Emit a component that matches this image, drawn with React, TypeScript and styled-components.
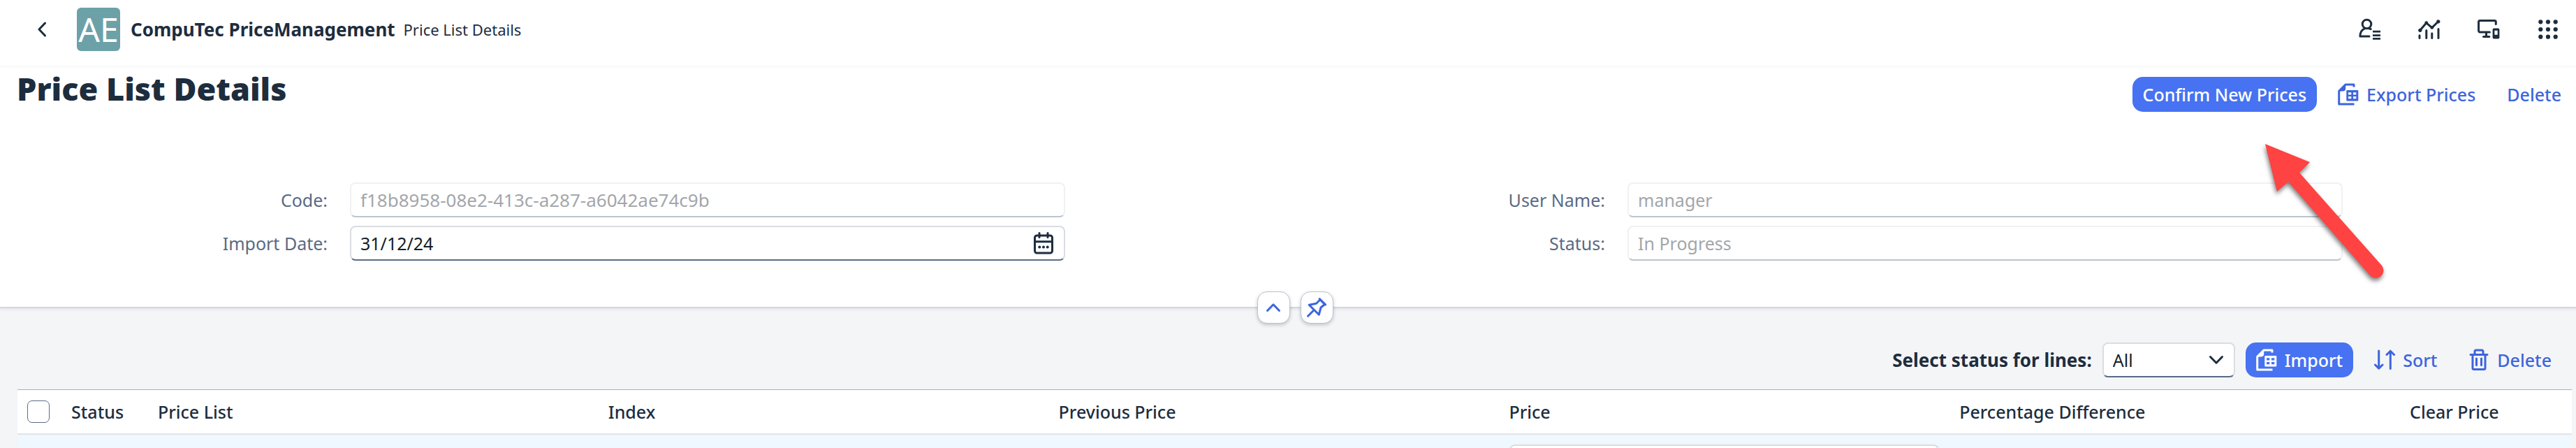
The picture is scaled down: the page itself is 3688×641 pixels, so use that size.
import React from "react";
import styled, { createGlobalStyle, css } from "styled-components";

const GlobalStyle = createGlobalStyle`
  *, *::before, *::after { box-sizing: border-box; }
  body {
    margin: 0;
    overflow: hidden;
    background: #f4f5f7;
    color: #1d2d3e;
    font-family: "Noto Sans", sans-serif;
    font-size: 25px;
    line-height: 36px;
  }
  button, input, select { font: inherit; color: inherit; margin: 0; }
  svg { display: block; flex: none; }
`;

const Page = styled.div`
  position: relative;
  height: 100vh;
  overflow: hidden;
`;

/* ---------- shell bar ---------- */

const ShellBar = styled.header`
  position: relative;
  z-index: 1;
  display: flex;
  align-items: center;
  padding: 11px 6px 21px 25px;
  background: #fff;
  box-shadow: 0 1px 4px rgba(34, 53, 72, 0.06);
`;

const IconButton = styled.button`
  display: flex;
  align-items: center;
  justify-content: center;
  width: 69px;
  height: 62px;
  padding: 0;
  border: 0;
  background: none;
  color: #1d2d3e;
`;

const Logo = styled.div`
  width: 62px;
  height: 62px;
  margin: 0 15px 0 16px;
  border-radius: 6px;
  background: #6ca1a8;
  color: #fff;
  font-size: 48px;
  line-height: 62px;
  text-align: center;
`;

const Brand = styled.span`
  font-size: 26px;
  font-weight: 700;
`;

const Subtitle = styled.span`
  margin-left: 12px;
  font-size: 22px;
`;

const ShellActions = styled.nav`
  display: flex;
  gap: 16px;
  margin-left: auto;
`;

/* ---------- page header ---------- */

const PageHeader = styled.section`
  position: relative;
  background: #fff;
  padding-bottom: 66px;
  border-bottom: 2px solid #d5d7da;
  box-shadow: 0 2px 4px rgba(34, 53, 72, 0.08);
`;

const TitleRow = styled.div`
  display: flex;
  align-items: flex-start;
  justify-content: space-between;
  padding: 0 6px 0 24px;
`;

const Title = styled.h1`
  margin: 3px 0 0;
  font-size: 45px;
  font-weight: 900;
  line-height: 60px;
`;

const Actions = styled.div`
  display: flex;
  gap: 15px;
  padding-top: 16px;
`;

const Button = styled.button<{ $primary?: boolean }>`
  display: flex;
  align-items: center;
  gap: 11px;
  height: 50px;
  padding: 0 15px;
  border: 0;
  border-radius: 15px;
  background: ${(p) => (p.$primary ? "#4772f1" : "transparent")};
  color: ${(p) => (p.$primary ? "#fff" : "#3d65dc")};
  font-weight: 550;
  white-space: nowrap;
`;

const Form = styled.form`
  display: grid;
  grid-template-columns: 1fr 1fr;
  row-gap: 12px;
  padding: 101px 15px 0;
`;

const Field = styled.div`
  display: grid;
  grid-template-columns: 486fr 1024fr 319fr;
  align-items: center;
`;

const FieldLabel = styled.label`
  padding-right: 32px;
  color: #5a6a84;
  text-align: right;
`;

const box = css`
  width: 100%;
  height: 50px;
  padding: 0 13px;
  border: 2px solid #d9dde2;
  border-bottom-color: #5b6b86;
  border-radius: 8px;
  background: #fff;
  color: #131e29;
  outline: 0;
`;

const TextInput = styled.input`
  ${box}
  &:disabled {
    border-color: #f0f1f3;
    border-bottom-color: #bcc4cf;
    color: #a3a6aa;
    opacity: 1;
  }
`;

const CodeInput = styled(TextInput)`
  font-size: 26px;
`;

/* Control and its trailing glyph share one grid cell. */
const WithGlyph = styled.div`
  display: grid;
  align-items: center;
  & > * { grid-area: 1 / 1; }
  & > svg {
    justify-self: end;
    margin-right: 16px;
    pointer-events: none;
    color: #1d2d3e;
  }
`;

const HeaderToggles = styled.div`
  position: absolute;
  left: 0;
  right: 0;
  bottom: -24px;
  display: flex;
  justify-content: center;
  gap: 15px;
  padding-left: 20px;
`;

const ToggleButton = styled.button`
  display: flex;
  align-items: center;
  justify-content: center;
  width: 47px;
  height: 46px;
  padding: 0;
  border: 1px solid #bcc3ce;
  border-radius: 14px;
  background: #fff;
  color: #3d65dc;
  box-shadow: 0 2px 5px rgba(34, 53, 72, 0.25);
`;

/* ---------- lines table ---------- */

const TableToolbar = styled.div`
  display: flex;
  align-items: center;
  justify-content: flex-end;
  gap: 15px;
  padding: 49px 20px 17px 25px;
`;

const ToolbarLabel = styled.label`
  font-size: 26px;
  font-weight: 700;
`;

const StatusFilter = styled(WithGlyph)`
  width: 190px;
`;

const Select = styled.select`
  ${box}
  appearance: none;
`;

const TableArea = styled.section`
  padding: 0 6px 0 25px;
`;

const Table = styled.table`
  width: 100%;
  table-layout: fixed;
  border-collapse: separate;
  border-spacing: 0;
  border-top: 1px solid #a8aebb;
  background: #fff;
`;

const HeadCell = styled.th<{ $width?: number }>`
  width: ${(p) => (p.$width ? `${p.$width}px` : "auto")};
  height: 64px;
  padding: 0 14px;
  border-bottom: 2px solid #e1e4e6;
  font-weight: 550;
  text-align: left;
  white-space: nowrap;
`;

const Cell = styled.td`
  height: 78px;
  padding: 14px 15px;
  background: #eff7ff;
`;

const CheckBox = styled.input`
  display: block;
  appearance: none;
  width: 32px;
  height: 32px;
  border: 1px solid #5b6b86;
  border-radius: 7px;
  background: #fff;
`;

/* ---------- callout arrow ---------- */

const Callout = styled.svg`
  position: absolute;
  top: 196px;
  right: 266px;
  z-index: 2;
  pointer-events: none;
  filter: drop-shadow(-1px 4px 3px rgba(0, 0, 0, 0.5));
`;

/* ---------- glyphs ---------- */

type GlyphProps = { w?: number; h?: number; children: React.ReactNode };

const Glyph = ({ w = 32, h = 32, children }: GlyphProps) => (
  <svg width={w} height={h} viewBox={`0 0 ${w} ${h}`} fill="none" stroke="currentColor"
    strokeWidth={3} strokeLinecap="round" strokeLinejoin="round" aria-hidden="true">
    {children}
  </svg>
);

const BackGlyph = () => (
  <Glyph w={16} h={22}><path d="M12.5 2 4 11l8.5 9" /></Glyph>
);

const UserGlyph = () => (
  <Glyph>
    <circle cx="11.5" cy="8.5" r="6.3" />
    <path d="M8.5 14.8C4.2 16.5 1.9 20 1.9 26H15M14.5 14.8l2.8.8" />
    <path d="M20 19.2h11M20 24.6h11M20 29.4h11" strokeWidth="2.8" strokeLinecap="butt" />
  </Glyph>
);

const ChartGlyph = () => (
  <Glyph>
    <path d="M2.6 17.4 11.8 6.8l8 6.8 9-8.8" />
    <path d="M2 24.8v3.6M11.8 17.5v10.9M19.8 21.8v6.6M29 15.5v12.9" />
    <g fill="currentColor" stroke="none">
      <circle cx="2.8" cy="17.3" r="2.6" /><circle cx="11.8" cy="6.6" r="2.4" />
      <circle cx="19.8" cy="13.4" r="2.4" /><circle cx="28.8" cy="4.8" r="2.6" />
    </g>
  </Glyph>
);

const DevicesGlyph = () => (
  <Glyph>
    <path d="M26.3 8.6V5.2a1.8 1.8 0 0 0-1.8-1.8H3.4a1.8 1.8 0 0 0-1.8 1.8v12.9a1.8 1.8 0 0 0 1.8 1.8h14M12.5 20v6M8.5 26.4h8.4" />
    <path d="M23.4 14.5h6.2a1.8 1.8 0 0 1 1.8 1.8v11.5a1.8 1.8 0 0 1-1.8 1.8h-6.2a1.8 1.8 0 0 1-1.8-1.8V16.3a1.8 1.8 0 0 1 1.8-1.8zM24.4 17.8v6h4.3v-6z"
      fill="currentColor" fillRule="evenodd" stroke="none" />
  </Glyph>
);

const GridGlyph = () => (
  <Glyph>
    <g fill="currentColor" stroke="none">
      {[5.3, 16, 26.7].map((y) => [5.3, 16, 26.7].map((x) => (
        <circle key={`${x}-${y}`} cx={x} cy={y} r="3.1" />
      )))}
    </g>
  </Glyph>
);

const SheetGlyph = () => (
  <Glyph w={30}>
    <path d="M23 5.4V1.9H11.2L1.7 11.4V30H23.5" strokeLinecap="butt" />
    <path d="M11.2 1.9V7.5Q11.2 11.4 7.3 11.4H1.7z" fill="currentColor" stroke="none" />
    <path d="M13.3 10h15a1 1 0 0 1 1 1v13.5a1 1 0 0 1-1 1h-15a1 1 0 0 1-1-1V11a1 1 0 0 1 1-1zM15 13.2v3.2h4.3v-3.2zM22 13.2v3.2h4.3v-3.2zM15 19v3.3h4.3V19zM22 19v3.3h4.3V19z"
      fill="currentColor" fillRule="evenodd" stroke="none" />
  </Glyph>
);

const SortGlyph = () => (
  <Glyph w={30}>
    <path d="M6.7 3v25M1.5 23l5.2 5.2L12 23M23.3 28.5V3.2M18 8.5l5.3-5.3 5.2 5.3" />
  </Glyph>
);

const TrashGlyph = () => (
  <Glyph w={30}>
    <path d="M3 8.5h24M9 8.5V4a2 2 0 0 1 2-2h8a2 2 0 0 1 2 2v4.5M6 8.5V27.5a2 2 0 0 0 2 2h14a2 2 0 0 0 2-2V8.5M11.5 14v9.5M18.5 14v9.5" />
  </Glyph>
);

const CalendarGlyph = () => (
  <Glyph w={30}>
    <rect x="2.5" y="5" width="25" height="25" rx="3" />
    <path d="M2.5 13.8h25M9 1.5v6M21 1.5v6" />
    <g fill="currentColor" stroke="none">
      <circle cx="9.3" cy="21.5" r="2" /><circle cx="15" cy="21.5" r="2" /><circle cx="20.7" cy="21.5" r="2" />
    </g>
  </Glyph>
);

const ChevronDown = () => (
  <Glyph w={22} h={14}><path d="M2.5 2.5 11 11.2l8.5-8.7" /></Glyph>
);

const ChevronUp = () => (
  <Glyph w={22} h={14}><path d="M2.5 11.5 11 2.8l8.5 8.7" /></Glyph>
);

const PinGlyph = () => (
  <Glyph w={28} h={28}>
    <path d="M3.2 10.2 13.5 8.2 19 2.8 25.5 9.5 20 14 17.3 24.3zM18.2 1.6l8.4 8.3M9.8 18l-8.2 8.3" />
  </Glyph>
);

const shellItems = [
  { label: "User settings", Icon: UserGlyph },
  { label: "Analytics", Icon: ChartGlyph },
  { label: "Devices", Icon: DevicesGlyph },
  { label: "Applications", Icon: GridGlyph },
];

const columns: { title: string; width?: number }[] = [
  { title: "Status", width: 124 },
  { title: "Price List" },
  { title: "Index" },
  { title: "Previous Price" },
  { title: "Price" },
  { title: "Percentage Difference" },
  { title: "Clear Price", width: 246 },
];

export default function App() {
  return (
    <Page>
      <GlobalStyle />
      <ShellBar>
        <IconButton aria-label="Back"><BackGlyph /></IconButton>
        <Logo>AE</Logo>
        <Brand>CompuTec PriceManagement</Brand>
        <Subtitle>Price List Details</Subtitle>
        <ShellActions>
          {shellItems.map(({ label, Icon }) => (
            <IconButton key={label} aria-label={label}><Icon /></IconButton>
          ))}
        </ShellActions>
      </ShellBar>

      <PageHeader>
        <TitleRow>
          <Title>Price List Details</Title>
          <Actions>
            <Button $primary>Confirm New Prices</Button>
            <Button><SheetGlyph />Export Prices</Button>
            <Button>Delete</Button>
          </Actions>
        </TitleRow>
        <Form>
          <Field>
            <FieldLabel htmlFor="code">Code:</FieldLabel>
            <CodeInput id="code" disabled defaultValue="f18b8958-08e2-413c-a287-a6042ae74c9b" />
          </Field>
          <Field>
            <FieldLabel htmlFor="user">User Name:</FieldLabel>
            <TextInput id="user" disabled defaultValue="manager" />
          </Field>
          <Field>
            <FieldLabel htmlFor="date">Import Date:</FieldLabel>
            <WithGlyph>
              <TextInput id="date" defaultValue="31/12/24" />
              <CalendarGlyph />
            </WithGlyph>
          </Field>
          <Field>
            <FieldLabel htmlFor="state">Status:</FieldLabel>
            <TextInput id="state" disabled defaultValue="In Progress" />
          </Field>
        </Form>
        <HeaderToggles>
          <ToggleButton aria-label="Collapse header"><ChevronUp /></ToggleButton>
          <ToggleButton aria-label="Pin header"><PinGlyph /></ToggleButton>
        </HeaderToggles>
      </PageHeader>

      <TableToolbar>
        <ToolbarLabel htmlFor="lines">Select status for lines:</ToolbarLabel>
        <StatusFilter>
          <Select id="lines" defaultValue="All"><option>All</option></Select>
          <ChevronDown />
        </StatusFilter>
        <Button $primary><SheetGlyph />Import</Button>
        <Button><SortGlyph />Sort</Button>
        <Button><TrashGlyph />Delete</Button>
      </TableToolbar>

      <TableArea>
        <Table>
          <thead>
            <tr>
              <HeadCell $width={63}><CheckBox type="checkbox" aria-label="Select all lines" /></HeadCell>
              {columns.map((c) => <HeadCell key={c.title} $width={c.width}>{c.title}</HeadCell>)}
            </tr>
          </thead>
          <tbody>
            <tr>
              <Cell />
              {columns.map((c) => (
                <Cell key={c.title}>{c.title === "Price" && <TextInput aria-label="Price" />}</Cell>
              ))}
            </tr>
          </tbody>
        </Table>
      </TableArea>

      <Callout width="184" height="212" viewBox="0 0 184 212" aria-hidden="true">
        <path d="M5 10 69 36 54 51 172 184A11 11 0 0 1 156 199L38 64 22 78z" fill="#ff4242" />
      </Callout>
    </Page>
  );
}
